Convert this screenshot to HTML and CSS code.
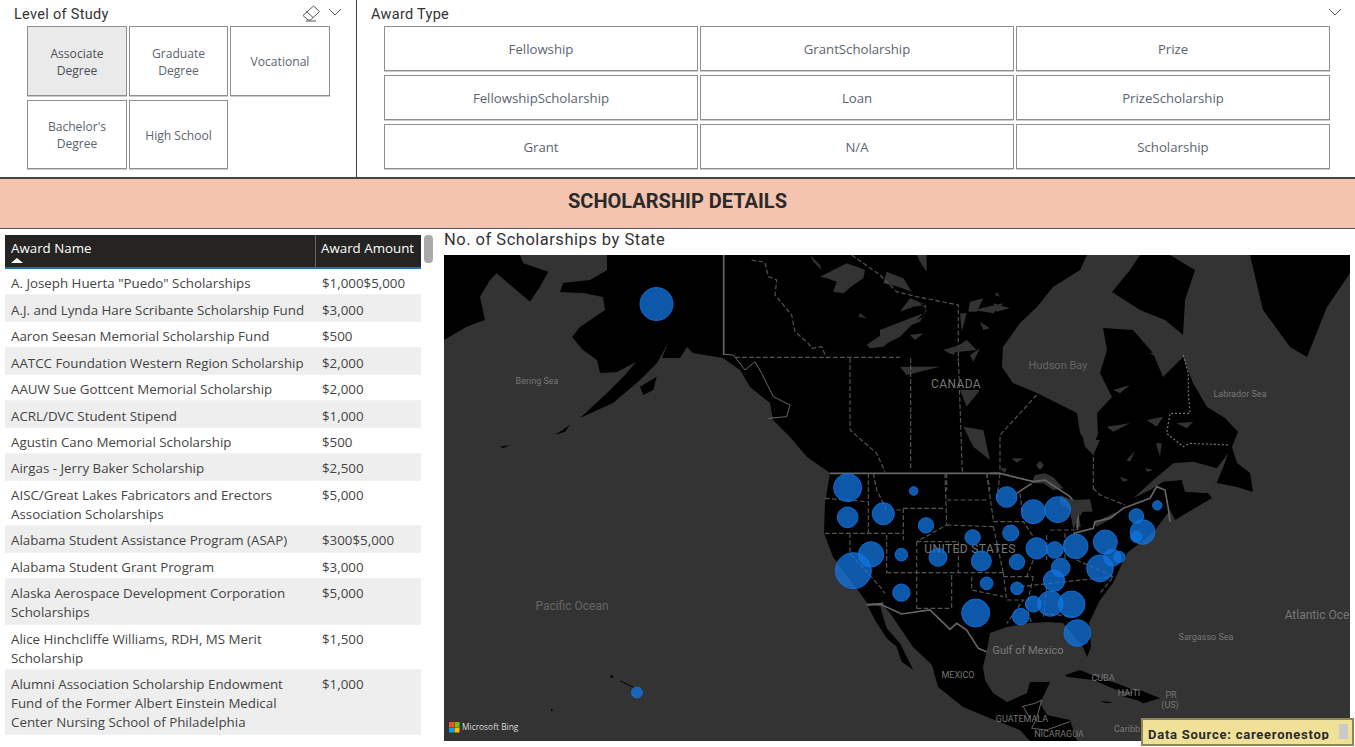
FILE: index.html
```html
<!DOCTYPE html>
<html lang="en">
<head>
<meta charset="utf-8">
<title>Scholarship Details</title>
<link rel="stylesheet" href="styles.css">
</head>
<body>
<div class="page">
  <section class="top">
    <div class="slicer level">
      <div class="slicer-head">
        <span class="slicer-title">Level of Study</span>
        <svg class="eraser" viewBox="0 0 18 17" width="18" height="17"><path d="M1 10.5 11.5 1 17.5 6.5 8.5 15H6Z M4.5 6.5 11 12.5 M4 16H14" fill="none" stroke="#555" stroke-width="1"/></svg>
        <svg class="chev" viewBox="0 0 14 8" width="14" height="8"><path d="M1 1 7 7 13 1" fill="none" stroke="#555" stroke-width="1"/></svg>
      </div>
      <div class="level-grid">
        <div class="chip selected">Associate<br>Degree</div>
        <div class="chip">Graduate<br>Degree</div>
        <div class="chip">Vocational</div>
        <div class="chip">Bachelor's<br>Degree</div>
        <div class="chip">High School</div>
      </div>
    </div>
    <div class="slicer award">
      <div class="slicer-head">
        <span class="slicer-title">Award Type</span>
        <svg class="chev" viewBox="0 0 14 8" width="14" height="8"><path d="M1 1 7 7 13 1" fill="none" stroke="#555" stroke-width="1"/></svg>
      </div>
      <div class="award-grid">
        <div class="chip">Fellowship</div>
        <div class="chip">GrantScholarship</div>
        <div class="chip">Prize</div>
        <div class="chip">FellowshipScholarship</div>
        <div class="chip">Loan</div>
        <div class="chip">PrizeScholarship</div>
        <div class="chip">Grant</div>
        <div class="chip">N/A</div>
        <div class="chip">Scholarship</div>
      </div>
    </div>
  </section>
  <header class="banner">SCHOLARSHIP DETAILS</header>
  <section class="main">
    <div class="table-wrap">
      <div class="table">
        <div class="thead">
          <div class="th th-name">Award Name<svg class="sort" viewBox="0 0 12 5" width="12" height="5"><path d="M0 5 6 0 12 5Z" fill="#fff"/></svg></div>
          <div class="th">Award Amount</div>
        </div>
        <div class="tr"><div>A. Joseph Huerta "Puedo" Scholarships</div><div>$1,000$5,000</div></div>
        <div class="tr"><div>A.J. and Lynda Hare Scribante Scholarship Fund</div><div>$3,000</div></div>
        <div class="tr"><div>Aaron Seesan Memorial Scholarship Fund</div><div>$500</div></div>
        <div class="tr"><div>AATCC Foundation Western Region Scholarship</div><div>$2,000</div></div>
        <div class="tr"><div>AAUW Sue Gottcent Memorial Scholarship</div><div>$2,000</div></div>
        <div class="tr"><div>ACRL/DVC Student Stipend</div><div>$1,000</div></div>
        <div class="tr"><div>Agustin Cano Memorial Scholarship</div><div>$500</div></div>
        <div class="tr"><div>Airgas - Jerry Baker Scholarship</div><div>$2,500</div></div>
        <div class="tr"><div>AISC/Great Lakes Fabricators and Erectors<br>Association Scholarships</div><div>$5,000</div></div>
        <div class="tr"><div>Alabama Student Assistance Program (ASAP)</div><div>$300$5,000</div></div>
        <div class="tr"><div>Alabama Student Grant Program</div><div>$3,000</div></div>
        <div class="tr"><div>Alaska Aerospace Development Corporation<br>Scholarships</div><div>$5,000</div></div>
        <div class="tr"><div>Alice Hinchcliffe Williams, RDH, MS Merit<br>Scholarship</div><div>$1,500</div></div>
        <div class="tr"><div>Alumni Association Scholarship Endowment<br>Fund of the Former Albert Einstein Medical<br>Center Nursing School of Philadelphia</div><div>$1,000</div></div>
      </div>
      <div class="scrollbar"></div>
    </div>
    <div class="map-panel">
      <div class="map-title">No. of Scholarships by State</div>
      <svg class="map" viewBox="444 255 906 486" width="906" height="486">
        <rect class="ocean" x="444" y="255" width="906" height="486"/>
        <!-- continent -->
        <path class="land" d="M607 255 607 270 590 280 563 283 560 292 583 293 603 297 605 310 580 327 572 337 583 350 597 360 600 373 617 372 636 362 625 375 605 395 580 418 613 403 640 380 657 363 668 343 662 358 680 358 687 347 693 353 723 358 740 370 750 387 770 403 773 420 790 437 807 457 830 473 825 503 824 533 833 557 860 593 867 603 882 604 890 613 913 647 932 665 938 687 963 707 987 717 1000 722 1020 730 1030 741 1077 741 1070 720 1047 715 1040 703 1045 693 1050 682 1030 682 1027 693 1007 702 993 693 985 680 983 667 987 650 990 633 1007 627 1030 623 1047 622 1063 623 1083 647 1087 657 1091 647 1089 623 1100 600 1113 583 1127 553 1153 533 1170 510 1175 520 1212 498 1207 492 1217 483 1237 487 1253 492 1250 473 1237 463 1232 447 1238 432 1225 418 1207 407 1193 383 1183 357 1163 377 1153 353 1133 330 1103 328 1107 350 1100 373 1112 397 1097 413 1098 433 1093 450 1080 433 1077 413 1037 393 1013 383 1002 367 1003 347 1020 323 1037 307 1053 287 1080 270 1087 255Z"/>
        <path class="land" d="M1112 292 1130 270 1140 255 1170 255 1195 270 1185 300 1183 335 1165 320 1140 310Z"/>
        <path class="land" d="M1250 255 1263 310 1290 347 1307 357 1327 307 1350 273 1350 255Z"/>
        <g transform="translate(850 590) scale(.33333)">
          <path class="land" d="M50 42 92 50 95 65 110 115 150 160 190 240 155 215 140 170 110 145 75 90Z"/>
          <path class="bline" d="M50 45 90 42 155 72 240 60 300 118 320 100 350 120 385 175 410 185"/>
          <path class="bline thin" d="M515 350 555 340 575 330 560 385 545 415 590 420 660 395M520 350 540 385"/>
        </g>
        <g transform="translate(440 230) scale(.33333)">
          <path class="land" d="M12 75H240L250 100 325 125 300 170 270 215 240 190 170 130 150 150 120 200 135 270 80 290 12 330Z"/>
          <path class="land" d="M600 470 650 440 640 480 610 495Z"/>
          <path class="land" d="M345 615 390 585 375 605Z M180 650 210 645 190 655Z"/>
          <path class="bline" d="M851 75V375"/>
          <path class="dash" d="M885 382H1380M1230 385V600L1310 670 1335 725"/>
          <path class="bline thin" d="M851 373 880 375 915 420 945 395 965 430 1000 500 1050 525 1040 560 985 565"/>
        </g>
        <g transform="translate(720 255) scale(.33333)">
          <path class="water" d="M300 65 350 40 380 25 410 35 435 45 430 70 400 90 370 115 340 110 350 80 320 70Z M440 270 490 235 540 210 590 195 610 185 620 150 600 145 620 165 600 200 560 215 520 250 490 275 450 280Z M420 175 440 190 415 185Z M270 0 300 30 305 45 280 20Z M590 0 620 0 620 50 600 20Z M500 50 550 70 575 110 535 95 490 85Z M540 170 570 130 620 150 580 155Z M570 240 610 235 585 255Z M720 175 740 175 725 230Z M750 140 790 130 770 170 745 170Z M820 145 870 160 830 170Z M780 200 810 220 790 225Z M670 285 720 270 700 300Z M750 300 780 280 760 320Z M830 110 840 125 825 120Z"/>
          <path class="dash" d="M95 15 135 22 145 65 170 75 165 120 215 180 225 230 265 265 275 280 305 275 320 310M395 0 480 60 530 110 590 125 715 150V320"/>
        </g>
        <g transform="translate(880 250) scale(.33333)">
          <path class="water" d="M0 240 130 190 60 260 0 290Z M250 530 310 540 330 630 280 590Z M60 350 180 350 80 375Z M260 270 290 300 200 310Z M680 530 750 520 700 545Z M890 520 940 515 920 535Z M800 510 850 500 830 530Z M240 420 300 420 260 470Z M700 420 750 405 720 430Z M280 180 370 160 340 190Z M560 230 600 215 570 240Z M810 310 850 300 830 320Z"/>
          <path class="dash" d="M92 325V660M247 665 235 325M470 435 360 555V665M640 600V720M320 670 330 720M200 670V720"/>
          <path class="dash dot" d="M910 315 925 370 925 430 930 490 870 490 860 550 910 590 930 580 1050 585"/>
        </g>
        <g transform="translate(780 460) scale(.33333)">
          <path class="bline" d="M150 40H660M265 435 310 430"/>
          <path class="dash" d="M135 115 265 125M265 40V220M280 40 290 90 320 150 370 150M135 220H370M370 145H495M370 145V240M495 40 500 195 410 245M500 120H620M500 195 640 200M410 245H535M210 220V280L300 380 315 400M320 225V340M410 245V445M320 338H670M410 445H515M515 345V450M535 245V338M640 200 670 338M640 185H730L760 230M620 40 640 180M660 40 650 120M720 100 730 180M670 350H760M670 338 680 420H730L680 490M575 350V390L670 410M760 350 740 440 755 490M800 380 790 470M720 380 1000 350M800 225V300M855 220V300M890 300 1000 350 960 400M790 460 880 470M810 210H890M760 300 740 350"/>
        </g>
        <g transform="translate(990 440) scale(.33333)">
          <path class="water" d="M135 105 165 100 190 112 220 145 190 150 160 130 125 130Z M235 175 262 190 272 260 258 265 250 210Z M245 180 300 178 308 215 278 215 270 230 258 195Z M280 0 330 0 310 45 285 20Z M138 75 150 64 162 75 150 90Z M30 85 50 85 45 100Z M65 55 100 55 80 68Z"/>
          <path class="bline" d="M0 100H30L130 125 165 120 240 170 265 205 262 270M80 160 125 130"/>
        </g>
        <g transform="translate(1060 430) scale(.33333)">
          <path class="water" d="M220 205 280 150 340 100 400 95 470 115 505 70 490 110 470 160 440 190 375 185 365 150 310 155 270 180Z M100 280 170 245 160 262 110 290Z M0 195 50 215 60 240 40 300 30 240 0 220Z M60 0 90 10 100 55 75 40Z M288 40 305 40 300 80Z M200 90 225 62 210 95Z M180 140 205 150 190 155Z M255 115 280 120 262 125Z"/>
          <path class="bline" d="M330 275 325 235 315 180 290 170 270 205 190 235 150 265 105 275 100 295 40 310"/>
          <path class="dash" d="M100 175 120 195 195 225"/>
          <path class="land" d="M380 190 410 200 395 205Z"/>
        </g>
        <g transform="translate(1000 640) scale(.33333)">
          <path class="land" d="M195 105 240 90 300 115 350 130 400 150 420 160 350 150 280 120 200 110Z M420 150 480 175 430 190 410 180 370 170Z M300 182 340 187 320 190Z"/>
        </g>
        <g transform="translate(440 640) scale(.33333)">
          <path class="hawaii" d="M540 122 580 142"/>
          <circle class="hawaii-dot" cx="515" cy="110" r="4"/>
          <circle class="hawaii-dot" cx="335" cy="210" r="3"/>
        </g>
        <!-- labels -->
        <text class="lbl xs" x="537" y="384">Bering Sea</text>
        <text class="lbl md wide" x="956" y="388">CANADA</text>
        <text class="lbl sm" x="1058" y="369">Hudson Bay</text>
        <text class="lbl xs" x="1240" y="397">Labrador Sea</text>
        <text class="lbl lg" x="572" y="610">Pacific Ocean</text>
        <text class="lbl md wide" x="970" y="553">UNITED STATES</text>
        <text class="lbl sm bright" x="1028" y="654">Gulf of Mexico</text>
        <text class="lbl xs" x="958" y="678">MEXICO</text>
        <text class="lbl xs" x="1103" y="681">CUBA</text>
        <text class="lbl xs" x="1129" y="696">HAITI</text>
        <text class="lbl xs" x="1171" y="698">PR</text>
        <text class="lbl xs" x="1170" y="708">(US)</text>
        <text class="lbl xs" x="1022" y="722">GUATEMALA</text>
        <text class="lbl xs" x="1059" y="737">NICARAGUA</text>
        <text class="lbl xs" x="1127" y="732">Caribb</text>
        <text class="lbl xs" x="1206" y="640">Sargasso Sea</text>
        <text class="lbl md" x="1317" y="619">Atlantic Oce</text>
        <!-- bubbles -->
        <circle class="bubble" cx="656.5" cy="304" r="16.5"/>
        <circle class="bubble" cx="637" cy="692.5" r="5.5"/>
        <g transform="translate(780 460) scale(.33333)" class="bubbles">
          <circle cx="203" cy="83" r="42"/><circle cx="203" cy="172" r="31"/><circle cx="310" cy="161" r="33"/><circle cx="401" cy="93" r="13"/><circle cx="438" cy="196" r="23"/><circle cx="364" cy="284" r="19"/><circle cx="273" cy="283" r="38"/><circle cx="220" cy="332" r="54"/><circle cx="364" cy="398" r="26"/><circle cx="474" cy="292" r="27"/><circle cx="578" cy="232" r="23"/><circle cx="604" cy="303" r="30"/><circle cx="620" cy="370" r="19"/><circle cx="587" cy="459" r="42"/><circle cx="711" cy="306" r="23"/><circle cx="692" cy="219" r="24"/><circle cx="680" cy="111" r="31"/><circle cx="760" cy="155" r="36"/><circle cx="833" cy="149" r="39"/><circle cx="770" cy="265" r="32"/><circle cx="824" cy="270" r="25"/><circle cx="887" cy="259" r="37"/><circle cx="976" cy="246" r="36"/><circle cx="842" cy="323" r="28"/><circle cx="822" cy="362" r="32"/><circle cx="960" cy="325" r="40"/><circle cx="997" cy="293" r="26"/><circle cx="1018" cy="291" r="17"/><circle cx="711" cy="385" r="19"/><circle cx="760" cy="432" r="24"/><circle cx="811" cy="431" r="38"/><circle cx="875" cy="433" r="40"/><circle cx="722" cy="470" r="25"/><circle cx="892" cy="519" r="40"/><circle cx="1069" cy="168" r="22"/><circle cx="1088" cy="216" r="37"/><circle cx="1069" cy="230" r="17"/><circle cx="1132" cy="136" r="14"/>
        </g>
        <!-- bing -->
        <rect x="449" y="722" width="5" height="5" fill="#f25022"/><rect x="454.5" y="722" width="5" height="5" fill="#7fba00"/><rect x="449" y="727.5" width="5" height="5" fill="#00a4ef"/><rect x="454.5" y="727.5" width="5" height="5" fill="#ffb900"/>
        <text class="bing" x="462" y="730">Microsoft Bing</text>
      </svg>
    </div>
  </section>
  <div class="source"><span class="source-text">Data Source: careeronestop</span><span class="source-thumb"></span></div>
</div>
</body>
</html>
```
FILE: styles.css
```css
* { box-sizing: border-box; }
html, body { margin: 0; padding: 0; background: #fff; }
.page {
  position: relative;
  width: 1355px;
  height: 747px;
  overflow: hidden;
  font-family: "Open Sans", "Liberation Sans", sans-serif;
  color: #444;
}
.top { display: flex; height: 179px; border-bottom: 2px solid #444; }
.slicer { position: relative; height: 177px; }
.level { width: 357px; border-right: 1.5px solid #444; }
.award { flex: 1; }
.slicer-head { display: flex; align-items: center; height: 26px; padding-left: 14px; }
.award .slicer-head { padding-right: 13px; }
.level .slicer-head { padding-right: 14px; }
.slicer-title { flex: 1; font: 14.5px Roboto, sans-serif; letter-spacing: .3px; color: #333; padding-top: 2px; }
.eraser { margin-right: 8px; margin-top: 1px; }
.chev { margin-top: -2px; }
.level-grid {
  display: grid;
  grid-template-columns: 100px 99px 100px;
  grid-template-rows: 70px 69px;
  column-gap: 2px;
  row-gap: 4px;
  margin-left: 27px;
}
.award-grid {
  display: grid;
  grid-template-columns: repeat(3, 314px);
  grid-auto-rows: 45px;
  column-gap: 2px;
  row-gap: 4px;
  margin-left: 27px;
}
.chip {
  display: flex;
  align-items: center;
  justify-content: center;
  text-align: center;
  border: 1px solid #8f8f8f;
  box-shadow: 0 1px 0 #ccc;
  padding-top: 1px;
  font-size: 12.1px;
  line-height: 17px;
  color: #5a6470;
  background: #fff;
}
.award .chip { font-size: 13.2px; }
.chip.selected { background: #eaeaea; color: #4a5058; }
.banner {
  height: 50px;
  background: #f4c4af;
  border-bottom: 1.5px solid #555;
  display: flex;
  align-items: center;
  justify-content: center;
  padding-bottom: 6px;
  font: 700 20px Roboto, sans-serif;
  color: #2a2a2a;
}
.main { display: flex; padding: 6px 0 0 5px; }
.table-wrap { display: flex; width: 439px; }
.table { width: 416px; font-size: 13.33px; line-height: 19px; }
.thead {
  display: grid;
  grid-template-columns: 310px 106px;
  height: 34px;
  background: #252423;
  border-bottom: 2px solid #1f6fb5;
  color: #fff;
}
.th { padding: 4px 6px 0; position: relative; white-space: nowrap; }
.th + .th { border-left: 1px solid #666; padding-left: 5px; }
.sort { position: absolute; left: 6px; top: 23px; }
.tr { display: grid; grid-template-columns: 310px 106px; border-bottom: 1px solid #f2f2f2; color: #444; }
.tr > div { padding: 5.1px 6px 1.4px; white-space: nowrap; }
.tr > div + div { padding-left: 7px; }
.tr:nth-child(odd) { background: #eeeeee; }
.scrollbar { width: 9px; height: 28px; margin-left: 3px; background: #a9a9a9; border-radius: 4px; }
.map-panel { width: 906px; margin-top: -6px; }
.map-title { height: 26px; padding-top: 1px; font: 16.5px Roboto, sans-serif; letter-spacing: .5px; color: #333; }
.map { display: block; }
.ocean { fill: #333333; }
.land { fill: #000; }
.water { fill: #333333; }
.bline { fill: none; stroke: #666; stroke-width: 5; }
.bline.thin { stroke-width: 3; }
.dash { fill: none; stroke: #555; stroke-width: 3.5; stroke-dasharray: 14 7; }
.dash.dot { stroke: #777; stroke-dasharray: 6 6; }
.hawaii { stroke: #000; stroke-width: 3; fill: none; }
.hawaii-dot { fill: #000; }
.lbl { font-family: Roboto, sans-serif; text-anchor: middle; fill: #777; }
.lbl.xs { font-size: 9px; fill: #777; }
.lbl.sm { font-size: 11px; fill: #666; }
.lbl.sm.bright { fill: #7d7d7d; }
.lbl.md { font-size: 12px; fill: #777; }
.lbl.md.wide { letter-spacing: .4px; }
.lbl.lg { font-size: 12px; fill: #666; }
.bubble, .bubbles circle { fill: #1176e0; fill-opacity: .75; stroke: #1170dd; stroke-opacity: .9; }
.bubble { stroke-width: 1; }
.bubbles circle { stroke-width: 3; }
.bing { font-family: "Open Sans", sans-serif; font-size: 8.4px; fill: #ddd; }
.source {
  position: absolute;
  left: 1141px;
  top: 718px;
  width: 213px;
  height: 28px;
  overflow: hidden;
  background: #f0e199;
  border: 2px solid #8d8658;
  padding: 5px 0 0 5px;
  font: 700 13px/20px Roboto, sans-serif;
  letter-spacing: .75px;
  color: #2b2b2b;
  white-space: nowrap;
}
.source-text { display: block; height: 15px; overflow: hidden; }
.source-thumb { position: absolute; right: 4px; top: 4px; width: 9px; height: 15px; background: #c9c9c9; }
```
